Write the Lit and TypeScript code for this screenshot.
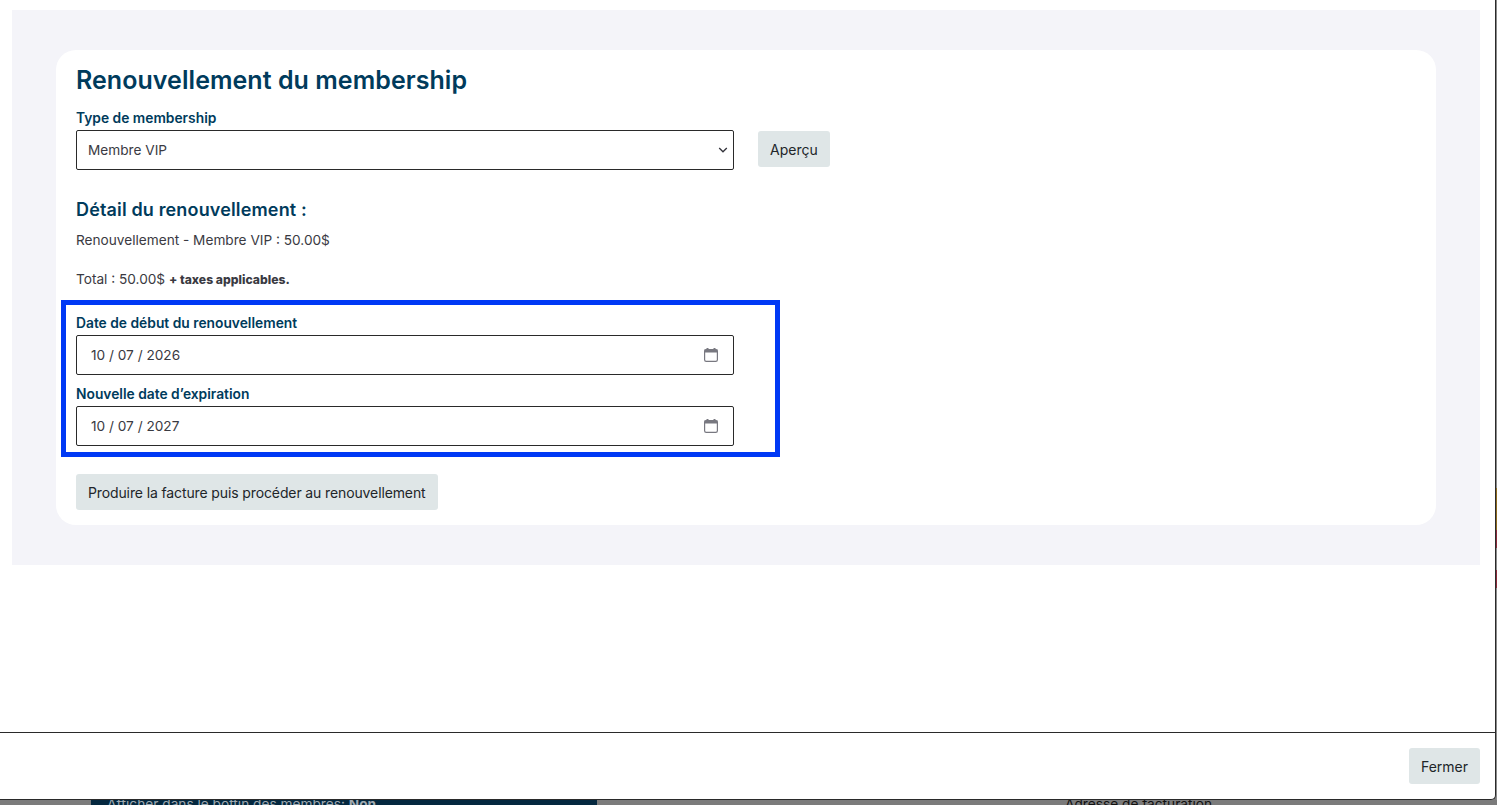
import { LitElement, html, css, svg } from "lit";
import { customElement } from "lit/decorators.js";

const calendar = svg`<svg class="cal" width="16" height="16" viewBox="0 0 16 16" fill="none"><rect x="1.6" y="2.6" width="12.8" height="11.8" rx="1.6" stroke="#787880" stroke-width="1.2"/><rect x="1.5" y="2.5" width="13" height="3" fill="#787880"/><rect x="3.5" y="1" width="2" height="2.5" fill="#787880"/><rect x="10.5" y="1" width="2" height="2.5" fill="#787880"/></svg>`;

@customElement("app-root")
export class AppRoot extends LitElement {
  static styles = css`
    :host { display: block; height: 805px; overflow: hidden; background: #7b7b7b; font-family: "Inter", "Liberation Sans", sans-serif; color: #3a3a42; font-size: 13.65px; }
    .top { display: flex; height: 800px; }
    .modal { width: 1496px; height: 800px; box-sizing: border-box; background: #fff; border-right: 1px solid #2a2a2a; border-bottom: 1px solid #2a2a2a; border-bottom-right-radius: 5px; display: flex; flex-direction: column; }
    .strip { flex: 1; background: linear-gradient(#8a8a8a 0 488px, #8d6a1f 488px 530px, #8a2a3a 530px 548px, #8a8a8a 548px 570px, #8a2a3a 570px 588px, #8a8a8a 588px); }
    .body { flex: 1; padding: 10px 15px 0 12px; }
    .panel { background: #f4f4f9; height: 555px; box-sizing: border-box; padding: 40px 44px; }
    .card { background: #fff; border-radius: 20px; height: 475px; box-sizing: border-box; padding: 16px 20px; }
    h1 { margin: 0; font-size: 25px; line-height: 29px; font-weight: 600; letter-spacing: 0.05px; color: #003b5c; }
    h2 { margin: 0; font-size: 18px; line-height: 21px; font-weight: 600; letter-spacing: 0.15px; color: #003b5c; }
    label { display: block; font-size: 13.8px; line-height: 17px; font-weight: 600; color: #003b5c; }
    .type-label { margin-top: 15px; }
    .row { display: flex; align-items: flex-start; gap: 24px; margin-top: 3px; }
    .row .btn { margin-top: 1px; }
    .field { width: 658px; height: 40px; box-sizing: border-box; border: 1px solid #2a2a2a; border-radius: 2px; background: #fff; display: flex; align-items: center; justify-content: space-between; padding: 0 14px; }
    .select { padding: 0 5px 0 11px; }
    .btn { display: flex; width: fit-content; align-items: center; height: 36px; padding: 0 12px; box-sizing: border-box; background: #dfe6e7; border-radius: 3px; font-family: "Inter", sans-serif; font-size: 14px; color: #212529; }
    .detail { margin-top: 29px; }
    p { margin: 0; line-height: 17px; }
    .line { margin-top: 12px; }
    .total { margin-top: 22px; }
    .total b { font-size: 12.2px; font-weight: 800; }
    .dates { width: 719px; height: 157px; box-sizing: border-box; margin: 12px 0 0 -15px; padding: 10px; border: 5px solid #0039f5; background: #fff; }
    .dates .next { margin-top: 11px; }
    .dates label { margin-bottom: 3px; }
    .produce { margin-top: 17px; letter-spacing: -0.12px; }
    .foot { height: 67px; box-sizing: border-box; border-top: 1px solid #2a2a2a; display: flex; justify-content: flex-end; align-items: flex-start; padding: 15px 15px 0 0; }
    .under { height: 5px; display: flex; font-size: 13.7px; line-height: 9px; overflow: hidden; }
    .navy { margin-left: 91px; width: 506px; background: #04283f; color: #a0aab1; padding-left: 16px; box-sizing: border-box; white-space: nowrap; }
    .addr { margin-left: 468px; color: #111; white-space: nowrap; }
  `;

  render() {
    return html`
      <div class="top">
        <div class="modal">
          <div class="body">
            <div class="panel">
              <div class="card">
                <h1>Renouvellement du membership</h1>
                <label class="type-label">Type de membership</label>
                <div class="row">
                  <div class="field select">
                    <span>Membre VIP</span>
                    <svg width="10" height="6" viewBox="0 0 10 6" fill="none"><path d="M1.2 1l3.8 3.8L8.8 1" stroke="#33333b" stroke-width="1.3"/></svg>
                  </div>
                  <span class="btn">Aperçu</span>
                </div>
                <h2 class="detail">Détail du renouvellement :</h2>
                <p class="line">Renouvellement - Membre VIP : 50.00$</p>
                <p class="total">Total : 50.00$ <b>+ taxes applicables.</b></p>
                <div class="dates">
                  <label>Date de début du renouvellement</label>
                  <div class="field"><span>10 / 07 / 2026</span>${calendar}</div>
                  <label class="next">Nouvelle date d’expiration</label>
                  <div class="field"><span>10 / 07 / 2027</span>${calendar}</div>
                </div>
                <span class="btn produce">Produire la facture puis procéder au renouvellement</span>
              </div>
            </div>
          </div>
          <div class="foot"><span class="btn">Fermer</span></div>
        </div>
        <div class="strip"></div>
      </div>
      <div class="under">
        <div class="navy">Afficher dans le bottin des membres: <b>Non</b></div>
        <div class="addr">Adresse de facturation</div>
      </div>
    `;
  }
}
